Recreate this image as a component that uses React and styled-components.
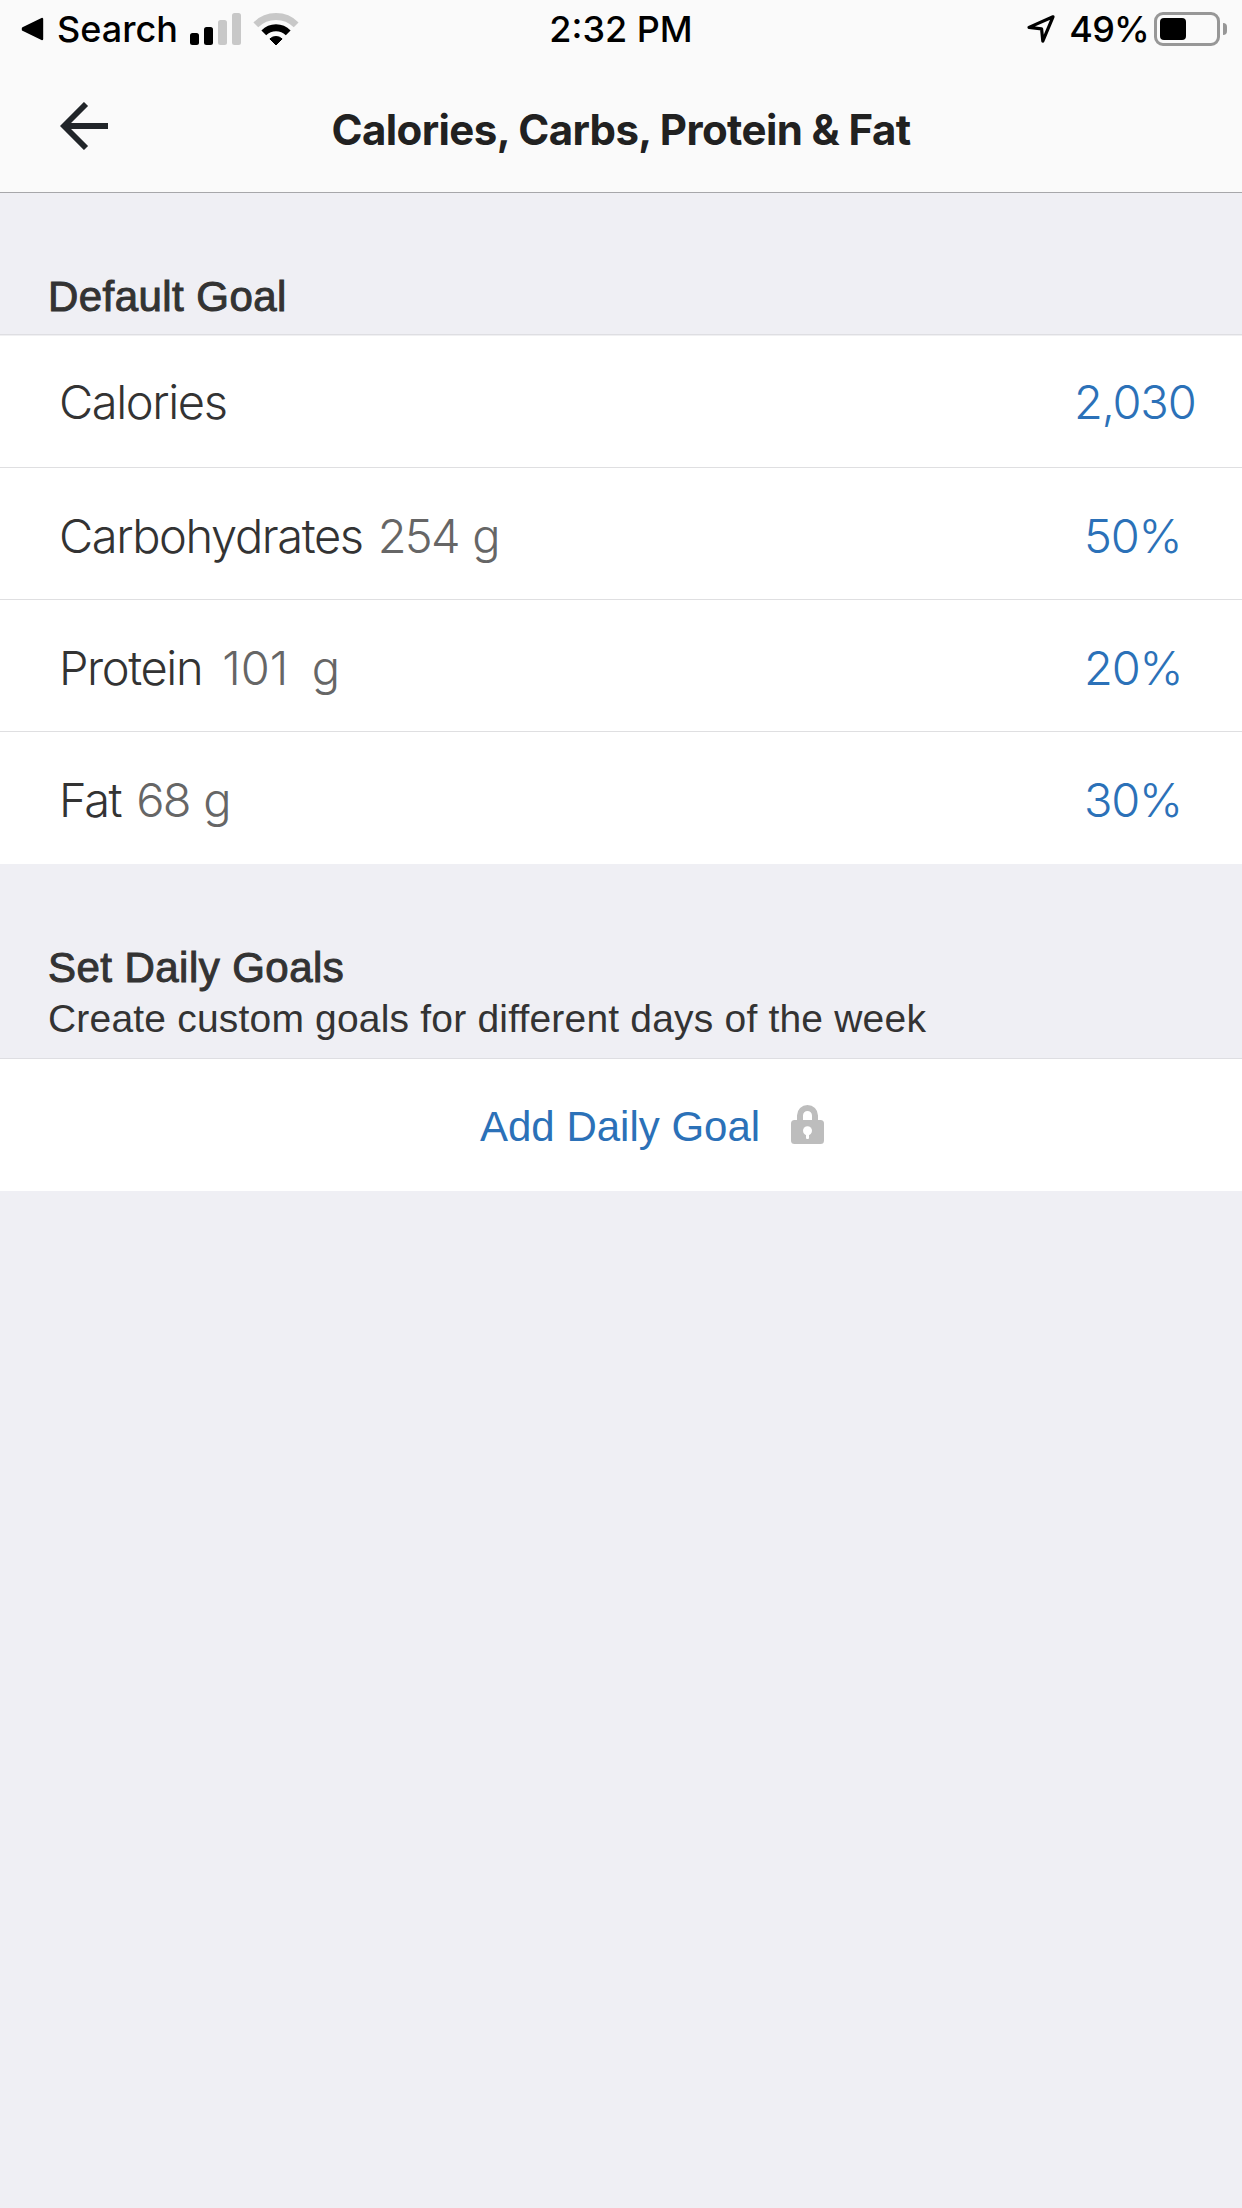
/* Tools */
import styled, { createGlobalStyle } from "styled-components";

/* Data */
const goals = [
    { name: "Calories", value: "2,030" },
    { name: "Carbohydrates", grams: "254", value: "50%" },
    { name: "Protein", grams: "101", value: "20%" },
    { name: "Fat", grams: "68", value: "30%" },
];

function StatusBar(){
    return (
        <Status>
            <StatusLeft>
                <svg width="24" height="24" viewBox="0 0 24 24">
                    <path d="M2 11.3 21 2v20L2 12.7z" fill="#000" stroke="#000" strokeWidth="2.4" strokeLinejoin="round" />
                </svg>
                <StatusText>Search</StatusText>
                <Signal>
                    <Bar $h={12} $on />
                    <Bar $h={18} $on />
                    <Bar $h={25} />
                    <Bar $h={32} />
                </Signal>
                <svg width="46" height="34" viewBox="0 0 46 34">
                    <path d="M2.850 12.850a28.500 28.500 0 0 1 40.300 0" fill="none" stroke="#c8c8c8" strokeWidth="6.8" />
                    <path d="M10.800 20.800a17.300 17.300 0 0 1 24.400 0" fill="none" stroke="#000" strokeWidth="6.8" />
                    <path d="M16.900 26.900a9 9 0 0 1 12.200 0L23 33z" fill="#000" stroke="#000" strokeLinejoin="round" />
                </svg>
            </StatusLeft>
            <StatusText>2:32 PM</StatusText>
            <StatusRight>
                <svg width="30" height="30" viewBox="0 0 30 30">
                    <path d="M27 2.800 3 13.400l12.600 1.400 1.200 12.400z" fill="none" stroke="#000" strokeWidth="3.200" strokeLinejoin="round" />
                </svg>
                <Charge>
                    <StatusText $space="-.8px">49%</StatusText>
                    <BatteryCase><span /></BatteryCase>
                    <BatteryTip />
                </Charge>
            </StatusRight>
        </Status>
    );
}

function GoalRow({name, grams, value}){
    return (
        <Row $low={Boolean(grams)}>
            <Label>
                {name}
                {grams && <Grams><Amount $narrow={grams.endsWith("1")}>{grams}</Amount> g</Grams>}
            </Label>
            <Value $percent={Boolean(grams)}>{value}</Value>
        </Row>
    );
}

function App(){
    return (
        <Screen>
            <GlobalStyle />
            <Header>
                <StatusBar />
                <NavBar>
                    <svg width="48" height="48" viewBox="0 0 48 48">
                        <path d="M48 24H5M26 2 4 24l22 22" fill="none" stroke="#212529" strokeWidth="5.8" />
                    </svg>
                    <Title>Calories, Carbs, Protein &amp; Fat</Title>
                </NavBar>
            </Header>
            <Section>
                <SectionHead $height={142}>
                    <h2>Default Goal</h2>
                </SectionHead>
                <Rows>
                    {goals.map((goal) => <GoalRow key={goal.name} {...goal} />)}
                </Rows>
            </Section>
            <Section>
                <SectionHead $height={195}>
                    <h2>Set Daily Goals</h2>
                    <p>Create custom goals for different days of the week</p>
                </SectionHead>
                <AddButton>
                    <span>Add Daily Goal</span>
                    <svg width="33" height="39" viewBox="0 0 33 39">
                        <path d="M9 17V10.500a7.500 7.500 0 0 1 15 0V17" fill="none" stroke="#bdbdbd" strokeWidth="6" />
                        <rect y="15" width="33" height="24" rx="3.500" fill="#bdbdbd" />
                        <circle cx="16.500" cy="25.700" r="4.500" fill="#fff" />
                        <rect x="15" y="27" width="3" height="7" rx="1" fill="#fff" />
                    </svg>
                </AddButton>
            </Section>
        </Screen>
    );
}


const GlobalStyle = createGlobalStyle`
    * {
        box-sizing: border-box;
    }
    body {
        margin: 0;
        background-color: #efeff4;
    }
    svg {
        display: block;
        flex-shrink: 0;
    }
    h1, h2, p {
        margin: 0;
    }
`;
const Screen = styled.div`
    width: 1242px;
    min-height: 2208px;
    background-color: #efeff4;
    color: #333333;
    font-family: "Liberation Sans", Arial, sans-serif;
`;
const Header = styled.header`
    height: 193px;
    background-color: #fafafa;
    border-bottom: 1px solid #a7a7aa;
`;
const Status = styled.div`
    display: grid;
    grid-template-columns: 1fr auto 1fr;
    height: 60px;
    padding: 0 15px;
    color: black;
`;
const StatusText = styled.span`
    font-family: Inter, sans-serif;
    font-size: 36px;
    font-weight: 500;
    line-height: 58px;
    letter-spacing: ${({$space}) => $space || "0"};
    white-space: nowrap;
`;
const StatusGroup = styled.div`
    display: flex;
    align-items: center;
    height: 58px;
`;
const StatusLeft = styled(StatusGroup)`
    gap: 12px;
    padding-left: 6px;
`;
const StatusRight = styled(StatusGroup)`
    justify-content: flex-end;
    gap: 13px;
`;
const Signal = styled.div`
    display: flex;
    align-items: flex-end;
    gap: 5px;
`;
const Bar = styled.span`
    width: 9px;
    height: ${({$h}) => $h}px;
    border-radius: 2.5px;
    background-color: ${({$on}) => ($on ? "#000" : "#c8c8c8")};
`;
const Charge = styled.div`
    display: flex;
    align-items: center;
    gap: 3px;
`;
const BatteryCase = styled.div`
    width: 66px;
    height: 34px;
    margin-left: 2px;
    padding: 3px;
    border: 3px solid #979797;
    border-radius: 9px;

    span {
        display: block;
        width: 26px;
        height: 22px;
        border-radius: 4px;
        background-color: black;
    }
`;
const BatteryTip = styled.div`
    width: 4px;
    height: 12px;
    border-radius: 0 4px 4px 0;
    background-color: #979797;
`;
const NavBar = styled.div`
    display: grid;
    grid-template-columns: 48px 1fr 48px;
    align-items: center;
    height: 132px;
    padding: 0 60px;
`;
const Title = styled.h1`
    padding-top: 6px;
    color: #212121;
    font-family: Inter, sans-serif;
    font-size: 42px;
    font-weight: 650;
    letter-spacing: -.6px;
    text-align: center;
`;
const Section = styled.section`
    display: flex;
    flex-direction: column;
`;
const SectionHead = styled.div`
    display: flex;
    flex-direction: column;
    justify-content: flex-end;
    height: ${({$height}) => $height}px;
    padding: 0 48px 11px;
    border-bottom: 1px solid #dedee2;

    h2 {
        font-size: 42px;
        font-weight: 400;
        line-height: 52px;
        letter-spacing: .45px;
        -webkit-text-stroke: 1px #333333;
    }
    p {
        padding: 1px 0 4px;
        font-size: 39px;
        line-height: 48px;
        letter-spacing: .19px;
    }
`;
const Rows = styled.div`
    border-top: 1px solid #f0f0f2;
`;
const Row = styled.div`
    display: flex;
    align-items: center;
    justify-content: space-between;
    height: 132px;
    padding: ${({$low}) => ($low ? "4px" : "0")} 0 0 59px;
    background-color: white;
    border-bottom: 1px solid #dfdfe1;
    font-family: Inter, sans-serif;
    font-size: 47px;
    font-weight: 300;
    letter-spacing: -1.4px;

    &:last-child {
        border-bottom-color: white;
    }
`;
const Label = styled.div`
    display: flex;
    gap: 15px;
`;
const Grams = styled.span`
    color: #666666;
    letter-spacing: -1.8px;
    word-spacing: 2px;
`;
/* a trailing 1 is thin, so it gets the room of a full digit */
const Amount = styled.span`
    padding: ${({$narrow}) => ($narrow ? "0 10px 0 5px" : "0")};
    letter-spacing: ${({$narrow}) => ($narrow ? "0" : "-1.7px")};
`;
const Value = styled.div`
    width: ${({$percent}) => ($percent ? "158px" : "168px")};
    color: #2b71b8;
    letter-spacing: -1.2px;
`;
const AddButton = styled.button`
    display: flex;
    align-items: center;
    height: 132px;
    gap: 31px;
    padding: 0 0 1px 480px;
    border: none;
    background-color: white;
    color: #2b71b8;
    font-family: inherit;
    font-size: 42px;

    span {
        padding-top: 4px;
    }
`;

export default App;
